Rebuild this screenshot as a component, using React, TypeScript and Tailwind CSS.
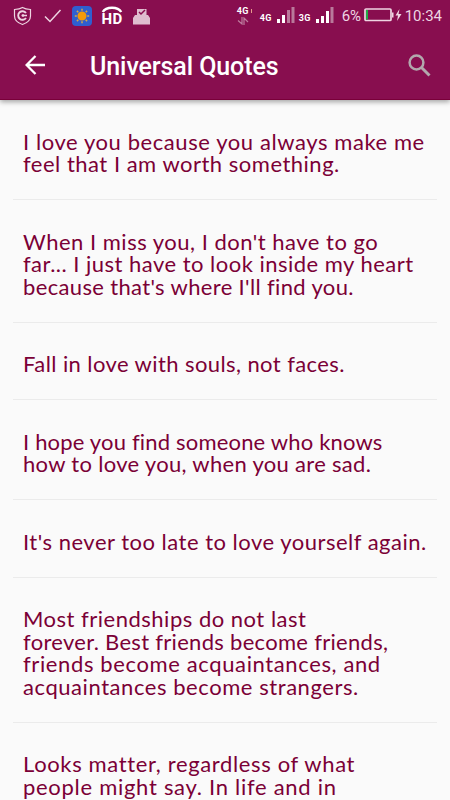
interface QuoteLine {
  text: string;
  tracking: string;
}

const quotes: QuoteLine[][] = [
  [
    { text: 'I love you because you always make me', tracking: 'tracking-[0.58px]' },
    { text: 'feel that I am worth something.', tracking: 'tracking-[0.5px]' },
  ],
  [
    { text: "When I miss you, I don't have to go", tracking: 'tracking-[0.5px]' },
    { text: 'far... I just have to look inside my heart', tracking: 'tracking-[0.48px]' },
    { text: "because that's where I'll find you.", tracking: 'tracking-[0.35px]' },
  ],
  [{ text: 'Fall in love with souls, not faces.', tracking: 'tracking-[0.41px]' }],
  [
    { text: 'I hope you find someone who knows', tracking: 'tracking-[0.18px]' },
    { text: 'how to love you, when you are sad.', tracking: 'tracking-[0.31px]' },
  ],
  [{ text: "It's never too late to love yourself again.", tracking: 'tracking-[0.5px]' }],
  [
    { text: 'Most friendships do not last', tracking: 'tracking-[0.5px]' },
    { text: 'forever. Best friends become friends,', tracking: 'tracking-[0.3px]' },
    { text: 'friends become acquaintances, and', tracking: 'tracking-[0.62px]' },
    { text: 'acquaintances become strangers.', tracking: 'tracking-[0.56px]' },
  ],
  [
    { text: 'Looks matter, regardless of what', tracking: 'tracking-[0.64px]' },
    { text: 'people might say. In life and in', tracking: 'tracking-[0.71px]' },
  ],
];

function StatusBar() {
  return (
    <div className="flex h-8 items-center justify-between pl-[13px] pr-2 text-[#eed5e2]">
      {/* Left: notification icons */}
      <div className="flex items-center">
        <svg className="h-5 w-[19px]" viewBox="0 0 19 20" fill="none" stroke="currentColor">
          <path d="M9.5 1.5C7 3 4.500 3.300 1.500 3.500V10c0 4.500 3.500 7 8 8.500 4.500-1.500 8-4 8-8.500V3.500c-3-.2-5.500-.5-8-2Z" strokeWidth="1.200" />
          <path d="M13 7a4.300 4.300 0 1 0 0 5" strokeWidth="1.900" />
          <path d="M8.500 9.500h5.500M10 8v3" strokeWidth="1.300" />
        </svg>
        <svg className="ml-3 h-4 w-[18px]" viewBox="0 0 18 16" fill="none" stroke="currentColor" strokeWidth="1.500">
          <path d="m1 8.500 5 5L16.500 2" />
        </svg>
        <div className="ml-[10px] flex h-5 w-5 items-center justify-center rounded bg-[#2f5fd0]">
          <svg className="h-4 w-4" viewBox="0 0 16 16" stroke="#d3a84b" strokeWidth="1.500">
            <circle cx="8" cy="8" r="3.800" fill="#f59b08" stroke="#f59b08" />
            <path d="M8 .8v2M8 13.200v2M.8 8h2M13.200 8h2M2.900 2.900l1.400 1.400M11.700 11.700l1.400 1.400M2.900 13.100l1.400-1.400M11.700 4.300l1.400-1.400" />
          </svg>
        </div>
        <div className="ml-[9px] flex w-[22px] flex-col items-center">
          <svg className="h-[7px] w-[22px]" viewBox="0 0 22 7" fill="none" stroke="#fff">
            <path d="M1.800 6C5 .2 17 .2 20.200 6" strokeWidth="2.500" />
          </svg>
          <span className="text-[15px] font-bold leading-[13px] tracking-[0.3px] text-white">HD</span>
        </div>
        <svg className="ml-[10px] h-[17px] w-[17px]" viewBox="0 0 17 17">
          <path d="M4 1h9.500v6H15l2 3v6.500H0V10l2-3h2Z" fill="#dfbdcf" />
          <path d="m6 4 2 2 4-4" fill="none" stroke="#880e4f" strokeWidth="1.500" />
        </svg>
      </div>

      {/* Right: signal, battery and clock */}
      <div className="flex items-center">
        <div className="-mt-px flex h-[18px] w-[17px] flex-col">
          <div className="flex items-center">
            <span className="text-[9px] font-bold leading-[9px] tracking-[0.4px] text-white">4G</span>
            <span className="ml-[2px] h-1 w-px bg-[#e79b8c]" />
          </div>
          <svg className="mt-px h-[8px] w-3" viewBox="0 0 12 8" fill="none" stroke="#bd7d9e" strokeWidth="1.200">
            <path d="M5 0v7L1 3.500M7 8V1l4 4" />
          </svg>
        </div>
        <div className="-mt-[4px] ml-[6px] flex h-[17px] items-end">
          <span className="w-[17px] text-[9px] font-bold leading-[9px] tracking-[0.4px] text-white">4G</span>
          <svg className="h-[17px] w-[18px]" viewBox="0 0 18 17">
            <path d="M0 13h3v4H0ZM5 9h3v8H5Z" fill="#fff" />
            <path d="M10 4h3v13h-3ZM14.500 1h3v16h-3Z" fill="#b9799b" />
          </svg>
        </div>
        <div className="-mt-[4px] ml-1 flex h-[17px] items-end">
          <span className="w-[17px] text-[9px] font-bold leading-[9px] tracking-[0.4px] text-white">3G</span>
          <svg className="h-[17px] w-[18px]" viewBox="0 0 18 17">
            <path d="M0 13h3v4H0ZM5 10h3v7H5ZM10 5h3v12h-3Z" fill="#fff" />
            <path d="M14.500 1h3v16h-3Z" fill="#b9799b" />
          </svg>
        </div>
        <span className="ml-2 w-[19px] whitespace-nowrap text-[15px] leading-5">6%</span>
        <svg className="-mt-[2px] ml-[3px] h-[14px] w-[38px]" viewBox="0 0 38 14">
          <rect x="1" y="1" width="26" height="11.500" rx="1" fill="none" stroke="#eed5e2" strokeWidth="1.700" />
          <rect x="2" y="2" width="2" height="9.500" fill="#22a845" />
          <path d="M28 4.500h1.500v5H28ZM35.500 1 31.500 7.500h2.500l-1 5.500 4.500-7H34.500Z" fill="#eed5e2" />
        </svg>
        <span className="ml-[3px] text-[15px] leading-5">10:34</span>
      </div>
    </div>
  );
}

function AppBar() {
  return (
    <div className="flex h-[68px] items-center pl-[25px] pr-[19px]">
      <button aria-label="Back" className="-mt-[2px]">
        <svg className="h-5 w-5" viewBox="0 0 20 20" fill="none" stroke="#fff" strokeWidth="2.300">
          <path d="M20 10H2M10.500 1 1.600 10l8.900 9" />
        </svg>
      </button>
      <h1 className="ml-[45px] mt-[2px] flex-1 text-[25px] font-medium leading-8 tracking-[-0.09px] text-white">
        Universal Quotes
      </h1>
      <button aria-label="Search" className="-mt-[2px]">
        <svg className="h-[23px] w-[23px]" viewBox="0 0 23 23" fill="none" stroke="#b2a8ad">
          <circle cx="8.500" cy="8.500" r="6.900" strokeWidth="2.500" />
          <path d="m13.500 13.500 8 8" strokeWidth="3" />
        </svg>
      </button>
    </div>
  );
}

export default function App() {
  return (
    <div className="flex h-[800px] w-[450px] flex-col overflow-hidden bg-[#fafafa] font-['Roboto',sans-serif]">
      <header className="relative h-[100px] shrink-0 border-b border-[#790039] bg-[#880e4f] shadow-[0_2px_5px_rgba(0,0,0,0.35)]">
        <StatusBar />
        <AppBar />
      </header>

      <main className="px-[13px] font-['Lato',sans-serif] text-[22px] leading-[22.6px] text-[#7b0036]">
        {quotes.map((lines) => (
          <p
            key={lines[0].text}
            className="border-b border-[#ebebeb] pb-[23.250px] pl-[10px] pt-[30.600px]"
          >
            {lines.map((line) => (
              <span key={line.text} className={`block whitespace-nowrap ${line.tracking}`}>
                {line.text}
              </span>
            ))}
          </p>
        ))}
      </main>
    </div>
  );
}
